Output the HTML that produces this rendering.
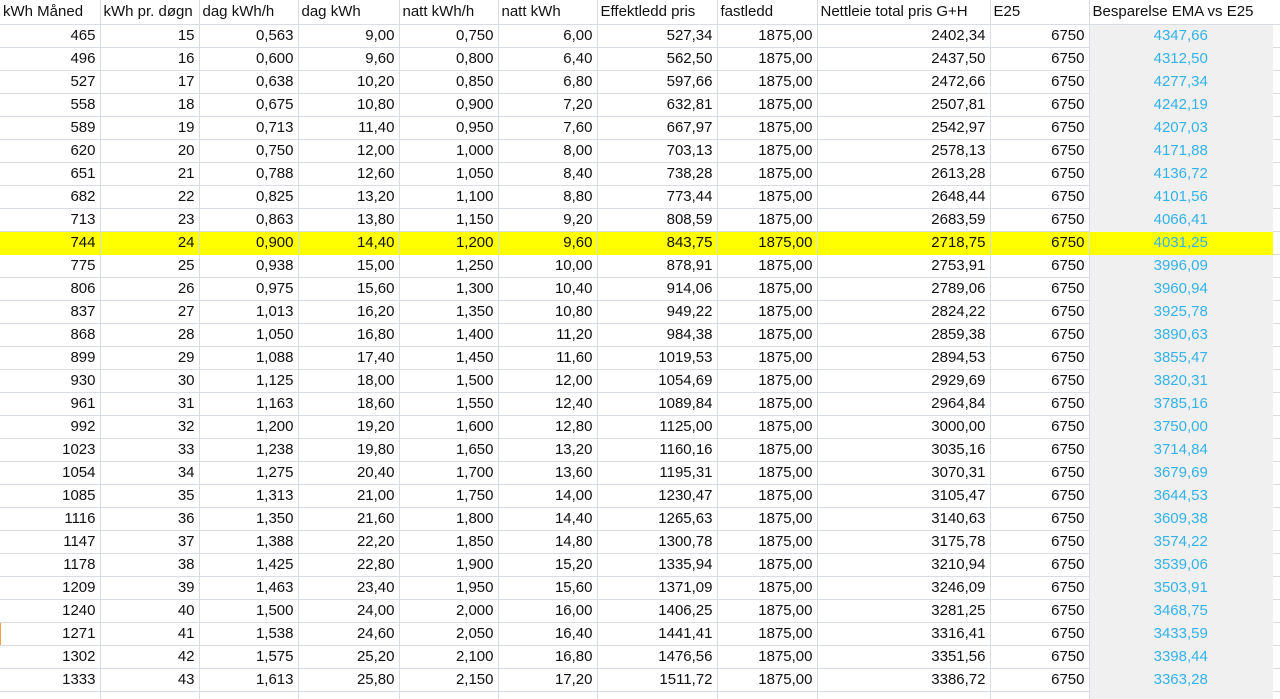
<!DOCTYPE html>
<html><head><meta charset="utf-8"><style>
html,body{margin:0;padding:0;background:#fff;width:1280px;height:699px;overflow:hidden}
table{border-collapse:collapse;table-layout:fixed;font-family:"Liberation Sans",sans-serif;font-size:15px;color:#111}
td{height:22px;border-right:1px solid #d8dce3;border-bottom:1px solid #d8dce3;padding:0 4px 0 3px;text-align:right;white-space:nowrap;overflow:hidden;line-height:22px}
tr.h td{text-align:left;height:24px}
td.g{background:#f0f0f0;color:#33b3ea;border-right:none;border-bottom:1px solid #f0f0f0;text-align:center}
tr.h td.g{color:#111;text-align:left;background:#fff;border-bottom:1px solid #d8dce3}
tr.y td{background:#ffff00;border-bottom-color:#ffff00}
tr.y td.g{background:#ffff00}
td.e{border-right:none}
</style></head><body>
<table>
<colgroup><col style="width:100px"><col style="width:99px"><col style="width:99px"><col style="width:101px"><col style="width:99px"><col style="width:99px"><col style="width:120px"><col style="width:100px"><col style="width:173px"><col style="width:99px"><col style="width:184px"><col style="width:7px"></colgroup>
<tr class="h"><td>kWh Måned</td><td>kWh pr. døgn</td><td>dag kWh/h</td><td>dag kWh</td><td>natt kWh/h</td><td>natt kWh</td><td>Effektledd pris</td><td>fastledd</td><td>Nettleie total pris G+H</td><td>E25</td><td class="g">Besparelse EMA vs E25</td><td class="e"></td></tr>
<tr><td>465</td><td>15</td><td>0,563</td><td>9,00</td><td>0,750</td><td>6,00</td><td>527,34</td><td>1875,00</td><td>2402,34</td><td>6750</td><td class="g">4347,66</td><td class="e"></td></tr>
<tr><td>496</td><td>16</td><td>0,600</td><td>9,60</td><td>0,800</td><td>6,40</td><td>562,50</td><td>1875,00</td><td>2437,50</td><td>6750</td><td class="g">4312,50</td><td class="e"></td></tr>
<tr><td>527</td><td>17</td><td>0,638</td><td>10,20</td><td>0,850</td><td>6,80</td><td>597,66</td><td>1875,00</td><td>2472,66</td><td>6750</td><td class="g">4277,34</td><td class="e"></td></tr>
<tr><td>558</td><td>18</td><td>0,675</td><td>10,80</td><td>0,900</td><td>7,20</td><td>632,81</td><td>1875,00</td><td>2507,81</td><td>6750</td><td class="g">4242,19</td><td class="e"></td></tr>
<tr><td>589</td><td>19</td><td>0,713</td><td>11,40</td><td>0,950</td><td>7,60</td><td>667,97</td><td>1875,00</td><td>2542,97</td><td>6750</td><td class="g">4207,03</td><td class="e"></td></tr>
<tr><td>620</td><td>20</td><td>0,750</td><td>12,00</td><td>1,000</td><td>8,00</td><td>703,13</td><td>1875,00</td><td>2578,13</td><td>6750</td><td class="g">4171,88</td><td class="e"></td></tr>
<tr><td>651</td><td>21</td><td>0,788</td><td>12,60</td><td>1,050</td><td>8,40</td><td>738,28</td><td>1875,00</td><td>2613,28</td><td>6750</td><td class="g">4136,72</td><td class="e"></td></tr>
<tr><td>682</td><td>22</td><td>0,825</td><td>13,20</td><td>1,100</td><td>8,80</td><td>773,44</td><td>1875,00</td><td>2648,44</td><td>6750</td><td class="g">4101,56</td><td class="e"></td></tr>
<tr><td>713</td><td>23</td><td>0,863</td><td>13,80</td><td>1,150</td><td>9,20</td><td>808,59</td><td>1875,00</td><td>2683,59</td><td>6750</td><td class="g">4066,41</td><td class="e"></td></tr>
<tr class="y"><td>744</td><td>24</td><td>0,900</td><td>14,40</td><td>1,200</td><td>9,60</td><td>843,75</td><td>1875,00</td><td>2718,75</td><td>6750</td><td class="g">4031,25</td><td class="e" style="background:#fff;border-bottom-color:#d8dce3"></td></tr>
<tr><td>775</td><td>25</td><td>0,938</td><td>15,00</td><td>1,250</td><td>10,00</td><td>878,91</td><td>1875,00</td><td>2753,91</td><td>6750</td><td class="g">3996,09</td><td class="e"></td></tr>
<tr><td>806</td><td>26</td><td>0,975</td><td>15,60</td><td>1,300</td><td>10,40</td><td>914,06</td><td>1875,00</td><td>2789,06</td><td>6750</td><td class="g">3960,94</td><td class="e"></td></tr>
<tr><td>837</td><td>27</td><td>1,013</td><td>16,20</td><td>1,350</td><td>10,80</td><td>949,22</td><td>1875,00</td><td>2824,22</td><td>6750</td><td class="g">3925,78</td><td class="e"></td></tr>
<tr><td>868</td><td>28</td><td>1,050</td><td>16,80</td><td>1,400</td><td>11,20</td><td>984,38</td><td>1875,00</td><td>2859,38</td><td>6750</td><td class="g">3890,63</td><td class="e"></td></tr>
<tr><td>899</td><td>29</td><td>1,088</td><td>17,40</td><td>1,450</td><td>11,60</td><td>1019,53</td><td>1875,00</td><td>2894,53</td><td>6750</td><td class="g">3855,47</td><td class="e"></td></tr>
<tr><td>930</td><td>30</td><td>1,125</td><td>18,00</td><td>1,500</td><td>12,00</td><td>1054,69</td><td>1875,00</td><td>2929,69</td><td>6750</td><td class="g">3820,31</td><td class="e"></td></tr>
<tr><td>961</td><td>31</td><td>1,163</td><td>18,60</td><td>1,550</td><td>12,40</td><td>1089,84</td><td>1875,00</td><td>2964,84</td><td>6750</td><td class="g">3785,16</td><td class="e"></td></tr>
<tr><td>992</td><td>32</td><td>1,200</td><td>19,20</td><td>1,600</td><td>12,80</td><td>1125,00</td><td>1875,00</td><td>3000,00</td><td>6750</td><td class="g">3750,00</td><td class="e"></td></tr>
<tr><td>1023</td><td>33</td><td>1,238</td><td>19,80</td><td>1,650</td><td>13,20</td><td>1160,16</td><td>1875,00</td><td>3035,16</td><td>6750</td><td class="g">3714,84</td><td class="e"></td></tr>
<tr><td>1054</td><td>34</td><td>1,275</td><td>20,40</td><td>1,700</td><td>13,60</td><td>1195,31</td><td>1875,00</td><td>3070,31</td><td>6750</td><td class="g">3679,69</td><td class="e"></td></tr>
<tr><td>1085</td><td>35</td><td>1,313</td><td>21,00</td><td>1,750</td><td>14,00</td><td>1230,47</td><td>1875,00</td><td>3105,47</td><td>6750</td><td class="g">3644,53</td><td class="e"></td></tr>
<tr><td>1116</td><td>36</td><td>1,350</td><td>21,60</td><td>1,800</td><td>14,40</td><td>1265,63</td><td>1875,00</td><td>3140,63</td><td>6750</td><td class="g">3609,38</td><td class="e"></td></tr>
<tr><td>1147</td><td>37</td><td>1,388</td><td>22,20</td><td>1,850</td><td>14,80</td><td>1300,78</td><td>1875,00</td><td>3175,78</td><td>6750</td><td class="g">3574,22</td><td class="e"></td></tr>
<tr><td>1178</td><td>38</td><td>1,425</td><td>22,80</td><td>1,900</td><td>15,20</td><td>1335,94</td><td>1875,00</td><td>3210,94</td><td>6750</td><td class="g">3539,06</td><td class="e"></td></tr>
<tr><td>1209</td><td>39</td><td>1,463</td><td>23,40</td><td>1,950</td><td>15,60</td><td>1371,09</td><td>1875,00</td><td>3246,09</td><td>6750</td><td class="g">3503,91</td><td class="e"></td></tr>
<tr><td>1240</td><td>40</td><td>1,500</td><td>24,00</td><td>2,000</td><td>16,00</td><td>1406,25</td><td>1875,00</td><td>3281,25</td><td>6750</td><td class="g">3468,75</td><td class="e"></td></tr>
<tr><td style="box-shadow:inset 1px 0 0 #f0a040">1271</td><td>41</td><td>1,538</td><td>24,60</td><td>2,050</td><td>16,40</td><td>1441,41</td><td>1875,00</td><td>3316,41</td><td>6750</td><td class="g">3433,59</td><td class="e"></td></tr>
<tr><td>1302</td><td>42</td><td>1,575</td><td>25,20</td><td>2,100</td><td>16,80</td><td>1476,56</td><td>1875,00</td><td>3351,56</td><td>6750</td><td class="g">3398,44</td><td class="e"></td></tr>
<tr><td>1333</td><td>43</td><td>1,613</td><td>25,80</td><td>2,150</td><td>17,20</td><td>1511,72</td><td>1875,00</td><td>3386,72</td><td>6750</td><td class="g">3363,28</td><td class="e"></td></tr>
<tr><td></td><td></td><td></td><td></td><td></td><td></td><td></td><td></td><td></td><td></td><td class="g"></td><td class="e"></td></tr>
</table>
</body></html>
